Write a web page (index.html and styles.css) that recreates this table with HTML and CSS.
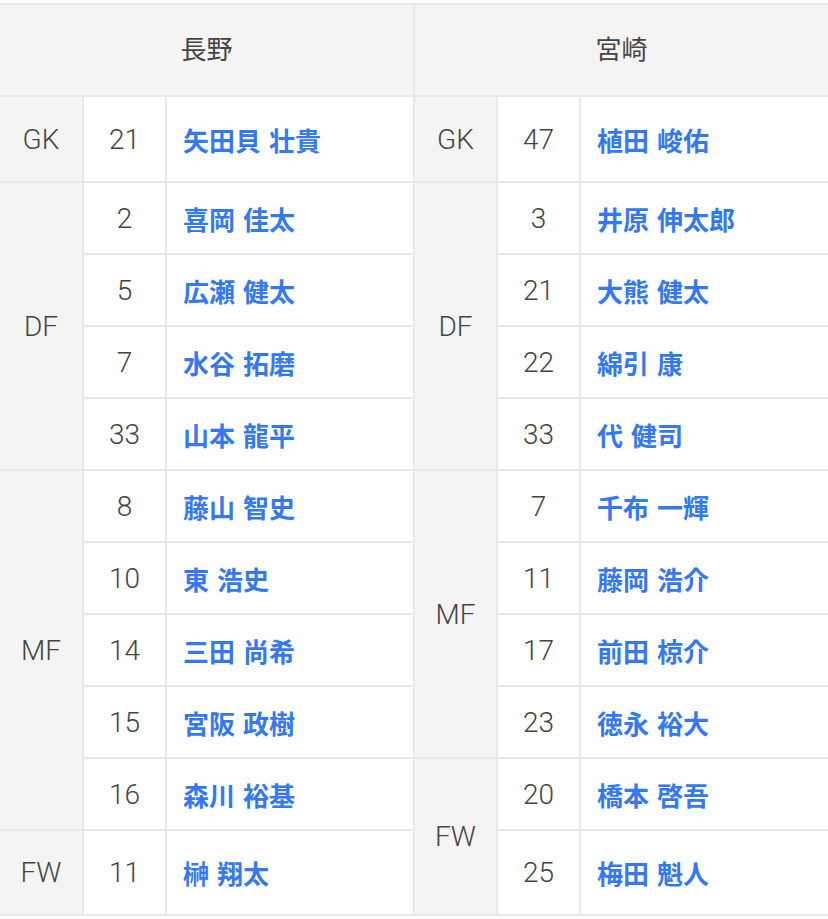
FILE: index.html
```html
<!DOCTYPE html>
<html lang="ja">
<head>
<meta charset="utf-8">
<title>スターティングメンバー</title>
<link rel="stylesheet" href="styles.css">
</head>
<body>
<div class="lineup">
  <div class="head">長野</div>
  <div class="head">宮崎</div>

  <div class="pos">GK</div><div class="num">21</div><div class="name">矢田貝 壮貴</div>
  <div class="pos">GK</div><div class="num">47</div><div class="name">植田 峻佑</div>

  <div class="pos span4">DF</div><div class="num">2</div><div class="name">喜岡 佳太</div>
  <div class="pos span4">DF</div><div class="num">3</div><div class="name">井原 伸太郎</div>
  <div class="num">5</div><div class="name">広瀬 健太</div>
  <div class="num">21</div><div class="name">大熊 健太</div>
  <div class="num">7</div><div class="name">水谷 拓磨</div>
  <div class="num">22</div><div class="name">綿引 康</div>
  <div class="num">33</div><div class="name">山本 龍平</div>
  <div class="num">33</div><div class="name">代 健司</div>

  <div class="pos span5">MF</div><div class="num">8</div><div class="name">藤山 智史</div>
  <div class="pos span4">MF</div><div class="num">7</div><div class="name">千布 一輝</div>
  <div class="num">10</div><div class="name">東 浩史</div>
  <div class="num">11</div><div class="name">藤岡 浩介</div>
  <div class="num">14</div><div class="name">三田 尚希</div>
  <div class="num">17</div><div class="name">前田 椋介</div>
  <div class="num">15</div><div class="name">宮阪 政樹</div>
  <div class="num">23</div><div class="name">徳永 裕大</div>
  <div class="num">16</div><div class="name">森川 裕基</div>

  <div class="pos span2">FW</div><div class="num">20</div><div class="name">橋本 啓吾</div>
  <div class="pos">FW</div><div class="num">11</div><div class="name">榊 翔太</div>
  <div class="num">25</div><div class="name">梅田 魁人</div>
</div>
</body>
</html>
```
FILE: styles.css
```css
html, body {
  margin: 0;
  padding: 0;
  background: #ffffff;
  overflow: hidden;
}

body {
  padding-top: 3px;
  font-family: Roboto, "Noto Sans CJK JP", sans-serif;
  color: #444444;
}

.lineup {
  display: grid;
  grid-template-columns: 82px 81px 246px 81px 81px 247px;
  grid-template-rows: 90px 84px repeat(9, 70px) 83px;
  gap: 2px;
  padding: 2px 0;
  background: #e8e8e8;
  width: 828px;
}

.lineup > div {
  display: flex;
  align-items: center;
  background: #ffffff;
}

.head {
  grid-column: span 3;
  justify-content: center;
  background: #f4f4f4 !important;
  font-family: "Noto Sans CJK JP", sans-serif;
  font-size: 26px;
  color: #444444;
  padding-bottom: 5px;
}

.pos {
  justify-content: center;
  background: #f4f4f4 !important;
  font-size: 28px;
  font-weight: 300;
}

.num {
  justify-content: center;
  font-size: 28px;
  font-weight: 300;
}

.name {
  padding-left: 16px;
  font-family: "Noto Sans CJK JP", sans-serif;
  font-weight: 700;
  font-size: 26px;
  word-spacing: 2px;
  color: #3478f6;
}

.span2 { grid-row: span 2; }
.span4 { grid-row: span 4; }
.span5 { grid-row: span 5; }
```
